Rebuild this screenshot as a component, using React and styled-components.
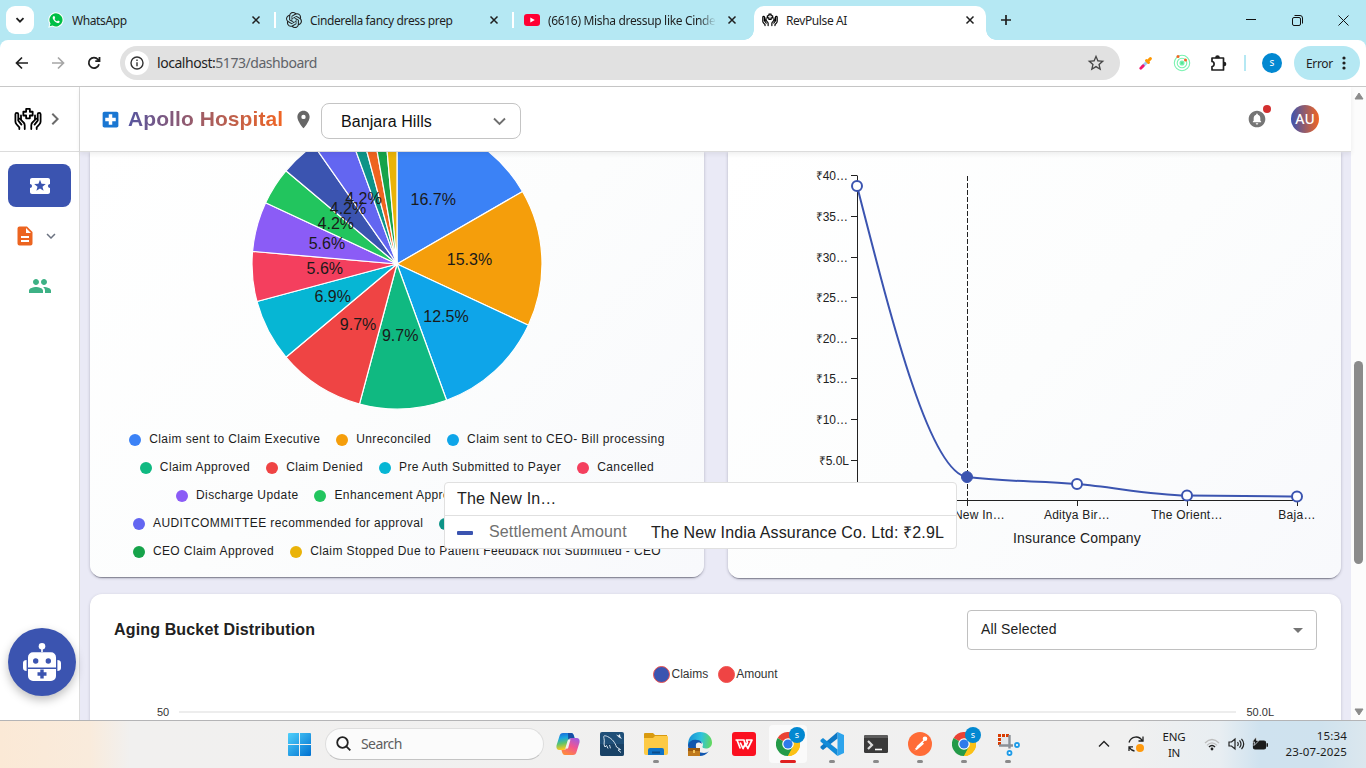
import React from "react";
import styled, { createGlobalStyle, css } from "styled-components";
import {
  MdLocalHospital,
  MdLocationOn,
  MdExpandMore,
  MdChevronRight,
  MdLocalActivity,
  MdPeople,
  MdCircleNotifications,
  MdArrowDropDown,
  MdStarBorder,
} from "react-icons/md";
import { SiOpenai } from "react-icons/si";

const UI_FONT = '"Noto Sans", "Open Sans", sans-serif';
const APP_FONT = '"Liberation Sans", Arial, sans-serif';
const INDIGO = "#3b54b0";

const Global = createGlobalStyle`
  * { box-sizing: border-box; }
  body { margin: 0; overflow: hidden; background: #fff; font-family: ${APP_FONT}; }
  svg { display: block; flex: none; }
`;

const Screen = styled.div`
  width: 1366px;
  height: 768px;
  display: flex;
  flex-direction: column;
  overflow: hidden;
  position: relative;
`;

/* ---------- browser window ---------- */

const TabStrip = styled.div`
  height: 40px;
  flex: none;
  background: #b5e8f3;
  display: flex;
  padding-left: 6px;
  font: 12px ${UI_FONT};
  color: #1f1f1f;
`;
const TabSearch = styled.div`
  width: 28px;
  height: 28px;
  margin: 6px 4px 0 0;
  border-radius: 9px;
  background: #fff;
  display: grid;
  place-items: center;
`;
const Tab = styled.div`
  width: 238px;
  height: 40px;
  display: flex;
  align-items: center;
  padding: 0 0 0 10px;
  position: relative;
  ${(p) =>
    p.$active &&
    css`
      &::before {
        content: "";
        position: absolute;
        inset: 6px 4px 0 2px;
        background: #fff;
        border-radius: 10px 10px 0 0;
      }
      &::after {
        content: "";
        position: absolute;
        bottom: 0;
        left: -8px;
        width: 252px;
        height: 10px;
        background: radial-gradient(circle at 0 0, transparent 9.5px, #fff 10px) left / 10px 10px no-repeat,
          radial-gradient(circle at 100% 0, transparent 9.5px, #fff 10px) right / 10px 10px no-repeat;
      }
    `}
  > * {
    position: relative;
    z-index: 1;
  }
`;
const TabTitle = styled.span`
  width: 168px;
  margin: 0 11px 0 8px;
  white-space: nowrap;
  overflow: hidden;
  letter-spacing: ${(p) => p.$ls || "-0.38px"};
  ${(p) => p.$fade && "mask-image: linear-gradient(90deg, #000 90%, transparent);"}
`;
const TabDivider = styled.i`
  width: 2px;
  height: 16px;
  margin-left: 13px;
  background: #fff;
`;
const NewTab = styled.div`
  width: 32px;
  display: grid;
  place-items: center;
`;
const WindowButtons = styled.div`
  margin-left: auto;
  display: flex;
  > div {
    width: 46px;
    display: grid;
    place-items: center;
  }
`;
const Toolbar = styled.div`
  height: 47px;
  flex: none;
  background: #b5e8f3;
`;
const ToolbarInner = styled.div`
  height: 47px;
  background: #fff;
  border-bottom: 1px solid #c8c8c8;
  border-radius: 8px 8px 0 0;
  display: flex;
  align-items: center;
  padding: 0 6px 0 4px;
  font-family: ${UI_FONT};
`;
const ToolButton = styled.div`
  width: 36px;
  flex: none;
  display: grid;
  place-items: center;
`;
const Omnibox = styled.div`
  width: 1000px;
  height: 34px;
  flex: none;
  margin: 0 8px;
  border-radius: 17px;
  background: #e1e1e1;
  display: flex;
  align-items: center;
  padding: 0 14px 1px 5px;
  font-size: 14px;
  letter-spacing: -0.46px;
  color: #5f6368;
  b {
    font-weight: 400;
    color: #1f1f1f;
  }
`;
const InfoBadge = styled.div`
  width: 24px;
  height: 24px;
  margin: 1px 8px 0 0;
  border-radius: 50%;
  background: #fff;
  display: grid;
  place-items: center;
`;
const Grow = styled.div`
  flex: 1;
`;
const ToolDivider = styled.i`
  width: 2px;
  height: 16px;
  flex: none;
  background: #b5e8f3;
  margin: 0 16px 0 8px;
`;
const ProfileDot = styled.div`
  width: 20px;
  height: 20px;
  border-radius: 50%;
  background: #0288d1;
  color: #fff;
  font-size: 10px;
  line-height: 19px;
  text-align: center;
  margin-right: 12px;
`;
const ErrorPill = styled.div`
  width: 66px;
  height: 34px;
  flex: none;
  border-radius: 17px;
  background: #b5e8f3;
  font-size: 12px;
  letter-spacing: -0.35px;
  color: #1f1f1f;
  display: flex;
  align-items: center;
  padding-left: 12px;
  gap: 9px;
`;

/* ---------- application shell ---------- */

const Viewport = styled.div`
  height: 633px;
  flex: none;
  display: flex;
  background: #fff;
`;
const Sidebar = styled.div`
  width: 80px;
  border-right: 1px solid #dcdcdc;
  display: flex;
  flex-direction: column;
`;
const SideHead = styled.div`
  height: 65px;
  border-bottom: 1px solid #dcdcdc;
  display: flex;
  align-items: center;
  padding-left: 14px;
  gap: 1px;
  color: #6b6b6b;
`;
const SideItem = styled.div`
  height: ${(p) => p.$h || 43}px;
  margin: ${(p) => p.$m};
  border-radius: 8px;
  display: flex;
  align-items: center;
  justify-content: center;
  gap: 5px;
  background: ${(p) => (p.$active ? INDIGO : "transparent")};
  color: ${(p) => p.$color};
`;
const Main = styled.div`
  width: 1271px;
  display: flex;
  flex-direction: column;
`;
const Header = styled.div`
  height: 65px;
  flex: none;
  border-bottom: 1px solid #dcdcdc;
  display: flex;
  align-items: center;
  padding: 0 32px 0 20px;
  background: #fff;
  box-shadow: 0 2px 5px rgba(0, 0, 0, 0.07);
  position: relative;
  z-index: 1;
`;
const Brand = styled.div`
  font-size: 21px;
  font-weight: 700;
  letter-spacing: 0.08px;
  margin: 0 9px 0 7px;
  width: 156px;
  white-space: nowrap;
  color: transparent;
  background: linear-gradient(90deg, #57559f, #f26522);
  background-clip: text;
  -webkit-background-clip: text;
`;
const BranchSelect = styled.div`
  width: 200px;
  height: 36px;
  margin: 4px 0 0 7px;
  border: 1px solid #c4c4c4;
  border-radius: 8px;
  display: flex;
  align-items: center;
  justify-content: space-between;
  padding: 1px 14px 0 19px;
  font-size: 16px;
  letter-spacing: 0.08px;
  color: #111;
`;
const Bell = styled.div`
  position: relative;
  color: #757575;
  &::after {
    content: "";
    position: absolute;
    right: -4px;
    top: -4px;
    width: 8px;
    height: 8px;
    border-radius: 50%;
    background: #d32f2f;
  }
`;
const UserAvatar = styled.div`
  width: 28px;
  height: 28px;
  margin: 0 0 0 24px;
  border-radius: 50%;
  background: linear-gradient(90deg, ${INDIGO}, #f26522);
  color: #fff;
  font: 500 14px/28px ${UI_FONT};
  text-align: center;
`;
const Content = styled.div`
  flex: 1;
  background: #eaeaf6;
  padding: 0 10px;
  overflow: hidden;
`;
const CardRow = styled.div`
  display: flex;
  gap: 24px;
  height: 442px;
  align-items: flex-start;
`;
const ChartCard = styled.div`
  width: ${(p) => p.$w}px;
  height: ${(p) => p.$h}px;
  border-radius: 0 0 12px 12px;
  background: linear-gradient(135deg, #ffffff 0%, #fcfdfd 50%, #f8f9fc 100%);
  box-shadow: 0 2px 1px -1px rgba(40, 40, 60, 0.4), 0 1px 3px rgba(40, 40, 60, 0.3);
`;
const LegendRow = styled.div`
  height: 28px;
  display: flex;
  align-items: center;
  gap: 16px;
  white-space: nowrap;
  justify-content: ${(p) => (p.$indent ? "flex-start" : "center")};
  padding-left: ${(p) => p.$indent || 0}px;
`;
const LegendItem = styled.div`
  display: flex;
  align-items: center;
  gap: 8px;
  font-size: 12px;
  letter-spacing: 0.4px;
  color: #1c1c1c;
  > i {
    width: 12px;
    height: 12px;
    margin-top: 2px;
    border-radius: 50%;
    background: ${(p) => p.$color};
  }
`;
const AgingCard = styled.div`
  height: 180px;
  border-radius: 12px;
  background: #fff;
  box-shadow: 0 1px 3px rgba(60, 60, 80, 0.25);
  padding: 16px 24px 0;
`;
const AgingHead = styled.div`
  display: flex;
  justify-content: space-between;
  height: 40px;
  h2 {
    margin: 0;
    font-size: 16px;
    line-height: 39px;
    color: #212121;
    letter-spacing: 0.15px;
  }
`;
const FilterSelect = styled.div`
  width: 350px;
  height: 40px;
  border: 1px solid #c0c0c0;
  border-radius: 4px;
  display: flex;
  align-items: center;
  justify-content: space-between;
  padding: 0 6px 2px 13px;
  font-size: 14px;
  letter-spacing: 0.15px;
  color: #212121;
  > svg {
    color: #757575;
    margin-top: 1px;
  }
`;
const BarLegend = styled.div`
  display: flex;
  justify-content: center;
  gap: 10px;
  margin: 16px 0 0;
  height: 16px;
`;
const BarLegendItem = styled.div`
  display: flex;
  align-items: center;
  gap: 1px;
  font-size: 12px;
  color: #333;
  &::before {
    content: "";
    width: 15px;
    height: 15px;
    border-radius: 50%;
    border: 1px solid #ef5350;
    background: ${(p) => p.$color};
  }
`;
const AxisLine = styled.div`
  display: flex;
  align-items: center;
  gap: 10px;
  margin-top: 22px;
  padding: 0 43px;
  font-size: 11px;
  color: #333;
  height: 16px;
  > i {
    flex: 1;
    height: 2px;
    background: #ededed;
  }
`;
const Scrollbar = styled.div`
  width: 15px;
  background: #fcfcfc;
  display: flex;
  flex-direction: column;
  align-items: center;
  padding: 5px 0 4px;
`;
const Thumb = styled.div`
  width: 9px;
  height: 203px;
  margin: 261px 0 auto;
  border-radius: 5px;
  background: #8b8b8b;
`;

/* ---------- overlays ---------- */

const Tooltip = styled.div`
  position: absolute;
  left: 444px;
  top: 482px;
  width: 513px;
  height: 67px;
  background: #fff;
  border: 1px solid #e0e0e0;
  border-radius: 4px;
  font-size: 16px;
  color: #212121;
  z-index: 3;
`;
const TooltipTitle = styled.div`
  height: 33px;
  line-height: 32px;
  padding-left: 12px;
  border-bottom: 1px solid #e0e0e0;
  letter-spacing: 0.15px;
`;
const TooltipRow = styled.div`
  height: 31px;
  display: flex;
  align-items: center;
  justify-content: space-between;
  padding: 0 12px;
  white-space: nowrap;
  letter-spacing: 0.15px;
  i {
    width: 16px;
    height: 4px;
    margin: 3px 16px 0 0;
    border-radius: 1px;
    background: ${INDIGO};
  }
  span {
    color: #707070;
    margin-right: auto;
  }
`;
const BotButton = styled.div`
  position: absolute;
  left: 8px;
  top: 628px;
  width: 68px;
  height: 68px;
  border-radius: 50%;
  background: ${INDIGO};
  box-shadow: 0 4px 10px rgba(0, 0, 0, 0.25);
  display: grid;
  place-items: center;
  z-index: 3;
`;

/* ---------- taskbar ---------- */

const Taskbar = styled.div`
  height: 48px;
  flex: none;
  border-top: 1px solid #b4b4b6;
  background: linear-gradient(90deg, #fbe9d6 0, #f9ebdc 90px, #f1f0ef 130px, #f0f0f0 1130px, #e8eef2 1220px, #cfe2ef 1260px, #cfe2ee 1320px, #dbe7ee 1366px);
  display: flex;
  align-items: center;
  padding: 0 19px 1px 277px;
  font-family: ${UI_FONT};
  color: #1b1b1b;
  position: relative;
  z-index: 4;
`;
const TaskItem = styled.div`
  width: 44px;
  height: 46px;
  display: grid;
  place-items: center;
  position: relative;
  &::before {
    content: "";
    position: absolute;
    inset: 4px 3px 4px;
    border-radius: 4px;
    background: ${(p) => (p.$active ? "#fafafa" : "transparent")};
  }
  &::after {
    content: "";
    display: ${(p) => (p.$open || p.$active ? "block" : "none")};
    position: absolute;
    bottom: 4px;
    left: ${(p) => (p.$active ? 14 : 19)}px;
    width: ${(p) => (p.$active ? 16 : 6)}px;
    height: 3px;
    border-radius: 2px;
    background: ${(p) => (p.$active ? "#e02020" : "#8a8a8a")};
  }
  > svg {
    position: relative;
  }
`;
const SearchBox = styled.div`
  width: 219px;
  height: 32px;
  margin: 0 2px 0 4px;
  border-radius: 16px;
  background: #fbfbfb;
  border: 1px solid #dedede;
  border-bottom-color: #c4c4c4;
  display: flex;
  align-items: center;
  gap: 10px;
  padding: 0 0 1px 10px;
  font-size: 14px;
  letter-spacing: -0.6px;
  color: #5e5e5e;
`;
const MiniBadge = styled.div`
  position: absolute;
  top: 6px;
  right: 5px;
  width: 16px;
  height: 16px;
  border-radius: 50%;
  background: #0288d1;
  color: #fff;
  font-size: 9px;
  line-height: 15px;
  text-align: center;
`;
const Tray = styled.div`
  margin-left: auto;
  display: flex;
  align-items: center;
  font-size: 11.5px;
  line-height: 16px;
  letter-spacing: -0.2px;
`;
const SyncIcon = styled.svg`
  margin-left: 17px;
`;
const VolumeIcon = styled.svg`
  margin-left: 8px;
`;
const BatteryIcon = styled.svg`
  margin-left: 7px;
`;
const Lang = styled.div`
  width: 30px;
  margin: 1px 15px 0 14px;
  text-align: center;
`;
const Clock = styled.div`
  width: 64px;
  margin: 0 0 1px 14px;
  text-align: right;
  white-space: nowrap;
  letter-spacing: 0.15px;
`;

/* ---------- drawings ---------- */

const Cross = () => (
  <svg width="10" height="10" viewBox="0 0 10 10" stroke="#1f1f1f" strokeWidth="1.5">
    <path d="M1.5 1.5l7 7M8.5 1.5l-7 7" />
  </svg>
);

const HandsLogo = ({ size = 28, w = 1.9 }) => (
  <svg width={size} height={size * 0.84} viewBox="0 0 30 25" fill="none" stroke="#000" strokeWidth={w} strokeLinejoin="round" strokeLinecap="round">
    <path d="M13 2h4v3h3v4h-3v3h-4V9h-3V5h3z" />
    <path d="M11.5 23.5v-4c0-1.5-.6-2.5-1.7-3.500L6.800 13c-1.500-1.400-3.200.3-2 1.800l3.200 4M4.600 13.500V7.700C4.600 5.600 1.500 5.600 1.500 7.700v7.800c0 1.200.4 2 1.200 2.900l3 3.300v1.800" />
    <path d="M18.500 23.500v-4c0-1.500.6-2.500 1.700-3.500l3-3c1.500-1.400 3.200.3 2 1.800l-3.200 4M25.400 13.500V7.700c0-2.100 3.100-2.100 3.100 0v7.800c0 1.200-.4 2-1.200 2.900l-3 3.300v1.800" />
    <path d="M7.500 13V9M22.500 13V9" />
  </svg>
);

const WhatsAppIcon = () => (
  <svg width="16" height="16" viewBox="0 0 16 16">
    <path d="M8 .3a7.600 7.600 0 0 0-6.600 11.400L.3 15.700l4.100-1.100A7.600 7.600 0 1 0 8 .3z" fill="#fff" />
    <path d="M8 1.300a6.600 6.600 0 0 0-5.500 10.200l-.8 2.800 2.900-.7A6.600 6.600 0 1 0 8 1.300z" fill="#00bf45" />
    <path d="M5.500 4.200c-1 .7-1.100 1.900-.2 3.400 1 1.700 2.400 3 4.200 3.500 1 .3 2-.3 2.200-1.300.1-.5-.1-.6-1.600-1.300-.4-.2-.7.9-1.200.8C7.900 9 7 8 6.600 7.200c-.2-.4.7-.7.6-1.100l-.6-1.500c-.2-.5-.7-.6-1.100-.4z" fill="#fff" />
  </svg>
);

const BotIcon = () => (
  <svg width="40" height="40" viewBox="0 0 40 40">
    <g fill="#fff">
      <circle cx="20" cy="4.200" r="3.300" />
      <path d="M19.200 6h1.600v4h-1.600z" />
      <path d="M11 10.300h18a5 5 0 0 1 5 5v10.200H6V15.300a5 5 0 0 1 5-5zM6 27h28v7a5 5 0 0 1-5 5H11a5 5 0 0 1-5-5z" />
      <path d="M4.600 18v11C2.400 29 1 28 1 26v-5c0-2 1.400-3 3.600-3zM35.400 18v11c2.200 0 3.600-1 3.600-3v-5c0-2-1.400-3-3.600-3z" />
    </g>
    <circle cx="13.700" cy="19" r="2.700" fill={INDIGO} />
    <circle cx="26.300" cy="19" r="2.700" fill={INDIGO} />
    <path d="M20 27.500v9M15.500 32h9" stroke={INDIGO} strokeWidth="3.400" />
  </svg>
);

const ChromeIcon = () => (
  <svg width="24" height="24" viewBox="0 0 24 24">
    <path d="M12 12L1.600 6A12 12 0 0 1 22.400 6z" fill="#ea4335" />
    <path d="M12 12L22.400 6A12 12 0 0 1 12 24l-2-3z" fill="#fbbc04" />
    <path d="M12 12l5.200 3L12 24A12 12 0 0 1 1.600 6z" fill="#249a48" />
    <path d="M12 6.500h10.700A12 12 0 0 1 12 24l4.800-9.200z" fill="#fbc116" />
    <circle cx="12" cy="12" r="5.800" fill="#fff" />
    <circle cx="12" cy="12" r="4.600" fill="#2f7bea" />
  </svg>
);

const SLICES = [
  [12, "#3b82f6"],
  [11, "#f59e0b"],
  [9, "#0ea5e9"],
  [7, "#10b981"],
  [7, "#ef4444"],
  [5, "#06b6d4"],
  [4, "#f43f5e"],
  [4, "#8b5cf6"],
  [3, "#22c55e"],
  [3, "#3b54b0"],
  [3, "#6366f1"],
  [1, "#0d9488"],
  [1, "#ee6420"],
  [1, "#16a34a"],
  [1, "#eab308"],
];

function PieChart() {
  const total = 72;
  const cx = 307;
  const cy = 112;
  const at = (n, r) => {
    const a = (n / total) * 2 * Math.PI;
    return [cx + r * Math.sin(a), cy - r * Math.cos(a)];
  };
  let sum = 0;
  const arcs = SLICES.map(([n, color]) => {
    const start = sum;
    sum += n;
    return { n, color, start, end: sum };
  });
  return (
    <svg width="614" height="273" viewBox="0 0 614 273">
      {arcs.map((s) => (
        <path
          key={s.start}
          d={`M${cx} ${cy}L${at(s.start, 145)}A145 145 0 0 1 ${at(s.end, 145)}Z`}
          fill={s.color}
          stroke="#fff"
          strokeWidth="1.2"
          strokeLinejoin="round"
        />
      ))}
      {arcs
        .filter((s) => s.n > 1)
        .map((s) => {
          const [x, y] = at((s.start + s.end) / 2, 72.5);
          return (
            <text key={s.start} x={x} y={Math.floor(y + (y > cy + 30 ? 5 : 4.4))} textAnchor="middle" fontSize="16" fill="#1a1a1a">
              {((s.n / total) * 100).toFixed(1)}%
            </text>
          );
        })}
    </svg>
  );
}

const POINTS = [
  [129, 34],
  [239, 325],
  [349, 332],
  [459, 343.5],
  [569, 344.5],
];
const TANGENTS = [3.9, 0.127, 0.084, 0.018, 0.005];
const Y_TICKS = ["₹40…", "₹35…", "₹30…", "₹25…", "₹20…", "₹15…", "₹10…", "₹5.0L"];
const X_TICKS = ["", "The New In…", "Aditya Bir…", "The Orient…", "Baja…"];

function SettlementChart() {
  const step = 110 / 3;
  const d = POINTS.slice(1).reduce((path, [x, y], i) => {
    const [px, py] = POINTS[i];
    return `${path}C${px + step} ${py + TANGENTS[i] * step} ${x - step} ${y - TANGENTS[i + 1] * step} ${x} ${y}`;
  }, `M${POINTS[0]}`);
  return (
    <svg width="613" height="426" viewBox="0 0 613 426" fill="#212121" fontSize="12">
      <path d="M129.500 23.500V348.500H569" fill="none" stroke="#212121" />
      {Y_TICKS.map((t, i) => {
        const y = Math.round(23.4 + i * 40.6);
        return (
          <g key={t}>
            <path d={`M123 ${y + 0.5}h6`} stroke="#212121" />
            <text x={i === 7 ? 121 : 120} y={y + 5} textAnchor="end">
              {t}
            </text>
          </g>
        );
      })}
      {X_TICKS.map((t, i) => (
        <g key={t}>
          {i > 0 && <path d={`M${POINTS[i][0] + 0.5} 348v6`} stroke="#212121" />}
          <text x={POINTS[i][0]} y="367" textAnchor="middle" letterSpacing="0.25">
            {t}
          </text>
        </g>
      ))}
      <text x="349" y="391" textAnchor="middle" fontSize="14" letterSpacing="0.15">
        Insurance Company
      </text>
      <path d="M239.500 24v324" stroke="#212121" strokeDasharray="5 2" />
      <path d={d} fill="none" stroke={INDIGO} strokeWidth="2" />
      {POINTS.map(([x, y], i) => (
        <circle key={x} cx={x} cy={y} r={i === 1 ? 5.5 : 5} fill={i === 1 ? INDIGO : "#fff"} stroke={INDIGO} strokeWidth={i === 1 ? 1 : 2} />
      ))}
    </svg>
  );
}

const Legend = ({ items, indent }) => (
  <LegendRow $indent={indent}>
    {items.map(([color, label]) => (
      <LegendItem key={color} $color={color}>
        <i />
        {label}
      </LegendItem>
    ))}
  </LegendRow>
);

function BrowserChrome() {
  return (
    <>
      <TabStrip>
        <TabSearch>
          <svg width="10" height="10" viewBox="0 0 10 10" fill="none" stroke="#1f1f1f" strokeWidth="1.8">
            <path d="M1.5 3.2L5 6.700l3.500-3.500" />
          </svg>
        </TabSearch>
        <Tab>
          <WhatsAppIcon />
          <TabTitle $ls="-0.4px">WhatsApp</TabTitle>
          <Cross />
          <TabDivider />
        </Tab>
        <Tab>
          <SiOpenai size={16} color="#222" />
          <TabTitle>Cinderella fancy dress prep</TabTitle>
          <Cross />
          <TabDivider />
        </Tab>
        <Tab>
          <svg width="16" height="16" viewBox="0 0 16 16">
            <rect y="2" width="16" height="12" rx="3" fill="#ff0033" />
            <path d="M6.300 5.500v5L10.800 8z" fill="#fff" />
          </svg>
          <TabTitle $fade $ls="-0.33px">(6616) Misha dressup like Cinderella</TabTitle>
          <Cross />
        </Tab>
        <Tab $active>
          <HandsLogo size={16} w={2.2} />
          <TabTitle>RevPulse AI</TabTitle>
          <Cross />
        </Tab>
        <NewTab>
          <svg width="12" height="12" viewBox="0 0 12 12" stroke="#1f1f1f" strokeWidth="1.7">
            <path d="M6 1v10M1 6h10" />
          </svg>
        </NewTab>
        <WindowButtons>
          <div>
            <svg width="10" height="10" stroke="#111">
              <path d="M0 4.500h10" />
            </svg>
          </div>
          <div>
            <svg width="11" height="11" fill="none" stroke="#111">
              <rect x=".5" y="2.500" width="8" height="8" rx="1.500" />
              <path d="M2.500.5h5.500a2.500 2.500 0 0 1 2.500 2.500v5.500" />
            </svg>
          </div>
          <div>
            <svg width="11" height="11" stroke="#111">
              <path d="M.5.5l10 10M10.500.5l-10 10" />
            </svg>
          </div>
        </WindowButtons>
      </TabStrip>
      <Toolbar>
        <ToolbarInner>
          <ToolButton>
            <svg width="14" height="14" viewBox="0 0 14 14" fill="none" stroke="#1f1f1f" strokeWidth="1.7">
              <path d="M13 7H2M7 1.500L1.500 7 7 12.500" />
            </svg>
          </ToolButton>
          <ToolButton>
            <svg width="14" height="14" viewBox="0 0 14 14" fill="none" stroke="#a6a6a6" strokeWidth="1.7">
              <path d="M1 7h11M7 1.500L12.500 7 7 12.500" />
            </svg>
          </ToolButton>
          <ToolButton>
            <svg width="14" height="14" viewBox="0 0 14 14" fill="none" stroke="#1f1f1f" strokeWidth="1.8">
              <path d="M12 8.200A5.200 5.200 0 1 1 11 3.500l1 1.200M12.500 1v4.200H8.300" />
            </svg>
          </ToolButton>
          <Omnibox>
            <InfoBadge>
              <svg width="14" height="14" viewBox="0 0 14 14" fill="none" stroke="#333" strokeWidth="1.4">
                <circle cx="7" cy="7" r="6" />
                <path d="M7 6.200v4M7 3.600v1.500" />
              </svg>
            </InfoBadge>
            <b>localhost:</b>5173/dashboard
            <Grow />
            <MdStarBorder size={20} color="#474747" />
          </Omnibox>
          <ToolButton>
            <svg width="14" height="14" viewBox="0 0 14 14">
              <path d="M3 11l6-6" stroke="#9cc9f5" strokeWidth="3" />
              <path d="M1.800 12.200l2.400-2.400" stroke="#f4156c" strokeWidth="2.8" strokeLinecap="round" />
              <path d="M7.500 4.500l2 2M8.800 5.200l2.600-2.600" stroke="#ff9800" strokeWidth="3" strokeLinecap="round" />
            </svg>
          </ToolButton>
          <ToolButton>
            <svg width="18" height="18" viewBox="0 0 18 18" fill="none" stroke="#79f2b0" strokeWidth="1.1">
              <circle cx="9" cy="9" r="7.700" />
              <circle cx="9" cy="9" r="4.800" />
              <circle cx="9" cy="9" r="2" fill="#57e596" />
              <circle cx="5" cy="2.500" r="1.500" fill="#f26522" stroke="none" />
              <circle cx="12.500" cy="6" r="1.500" fill="#f26522" stroke="none" />
            </svg>
          </ToolButton>
          <ToolButton>
            <svg width="18" height="18" viewBox="0 0 18 18" fill="none" stroke="#1f1f1f" strokeWidth="1.7" strokeLinejoin="round">
              <path d="M3 4h11.500v12H3v-3.500c2.800 0 2.800-5 0-5z" />
              <path d="M7 3.500a1.500 1.500 0 0 1 3 0zM15 8.500a1.500 1.500 0 0 1 0 3z" fill="#1f1f1f" />
            </svg>
          </ToolButton>
          <ToolDivider />
          <ProfileDot>s</ProfileDot>
          <ErrorPill>
            Error
            <svg width="4" height="14" fill="#1f1f1f">
              <circle cx="2" cy="2" r="1.600" />
              <circle cx="2" cy="7" r="1.600" />
              <circle cx="2" cy="12" r="1.600" />
            </svg>
          </ErrorPill>
        </ToolbarInner>
      </Toolbar>
    </>
  );
}

function WindowsTaskbar() {
  return (
    <Taskbar>
      <TaskItem>
        <svg width="23" height="23" viewBox="0 0 23 23">
          <defs>
            <linearGradient id="win" x1="0" y1="0" x2="1" y2="1" gradientUnits="objectBoundingBox">
              <stop offset="0" stopColor="#4fd0fb" />
              <stop offset="1" stopColor="#0070d0" />
            </linearGradient>
          </defs>
          <path d="M0 1q0-1 1-1h10v11H0zM12 0h10q1 0 1 1v10H12zM0 12h11v11H1q-1 0-1-1zM12 12h11v10q0 1-1 1H12z" fill="url(#win)" />
        </svg>
      </TaskItem>
      <SearchBox>
        <svg width="15" height="15" viewBox="0 0 15 15" fill="none" stroke="#222" strokeWidth="1.8">
          <circle cx="6.500" cy="6.500" r="5.300" />
          <path d="M10.300 10.300l4 4" />
        </svg>
        Search
      </SearchBox>
      <TaskItem>
        <svg width="24" height="22" viewBox="0 0 24 22">
          <defs>
            <linearGradient id="cpa" x1="0" y1="0" x2=".2" y2="1">
              <stop offset="0" stopColor="#1b62d8" />
              <stop offset=".35" stopColor="#1aa6e0" />
              <stop offset=".65" stopColor="#5fc46a" />
              <stop offset="1" stopColor="#ffc91f" />
            </linearGradient>
            <linearGradient id="cpb" x1=".8" y1="0" x2=".3" y2="1">
              <stop offset="0" stopColor="#a05be0" />
              <stop offset=".5" stopColor="#f2558f" />
              <stop offset="1" stopColor="#ff8a3c" />
            </linearGradient>
          </defs>
          <path d="M7 0h8c2 0 2.500 1.500 3 3l.5 2h-3c-2 0-3 1-3.500 3L10 15c-.5 1.500-1.500 2-3 2H3.500C1 17 0 15 .5 12.500L3.500 3C4 1 5 0 7 0z" fill="url(#cpa)" />
          <path d="M17 22H9c-2 0-2.500-1.500-3-3l-.5-2h2c2 0 3-1 3.500-3l2-7c.5-1.500 1.500-2 3-2h4.500C23 5 24 7 23.500 9.500l-3 9.500c-.5 2-1.500 3-3.500 3z" fill="url(#cpb)" />
          <path d="M14.500 6.500L12 15.500H9.300l2.700-9z" fill="#f1f0ef" />
          <path d="M12 0h3c2 0 2.500 1.500 3 3l.5 2h-3c-2 0-3 1-3.300 2z" fill="#174fa5" />
        </svg>
      </TaskItem>
      <TaskItem>
        <svg width="24" height="24" viewBox="0 0 24 24">
          <rect width="24" height="24" rx="2" fill="#1f4f78" />
          <path d="M0 12h24v10a2 2 0 0 1-2 2H2a2 2 0 0 1-2-2z" fill="#173d5e" opacity=".7" />
          <path d="M5 15C3 12 5 10 4 6.500 3 3 5 3.500 7.500 4.500c5 2.500 7.500 6 9 10.500l4 2.500-2.500.5 3 2.500M5 15l1.500-1.500 1.500 3M9.500 13c1 2 0 3 1.500 3" fill="none" stroke="#d7e5f0" strokeWidth="1" />
          <path d="M16 2.500l2.500 1L20 2l.3 2.500L22 7l-3-1.500z" fill="#e8f0f7" />
        </svg>
      </TaskItem>
      <TaskItem $open>
        <svg width="24" height="22" viewBox="0 0 24 22">
          <path d="M1 0h8l2 2h12v4H0V1q0-1 1-1z" fill="#d99a0f" />
          <path d="M0 5h9l2-2h12q1 0 1 1v16q0 2-2 2H2q-2 0-2-2z" fill="#fdca45" />
          <path d="M4 22v-5q0-2 2-2h12q2 0 2 2v5z" fill="#1073c6" />
          <path d="M8 18.500h8v2H8z" fill="#0a4d8c" />
        </svg>
      </TaskItem>
      <TaskItem>
        <svg width="24" height="24" viewBox="0 0 24 24">
          <defs>
            <linearGradient id="edge" x1="0" y1=".3" x2="1" y2=".4">
              <stop offset="0" stopColor="#168fd6" />
              <stop offset=".55" stopColor="#2fc3dd" />
              <stop offset="1" stopColor="#62d85e" />
            </linearGradient>
          </defs>
          <path d="M0 13C0 5 5 0 12 0s12 5 12 10.500c0 4-3 6-6 6-2.500 0-4-1-3.500-2 1-2 .5-5-3-5-5 0-7 4-6.500 8z" fill="url(#edge)" />
          <path d="M8 12c-1 6 3 9 8 9 2 0 4-1 5-2-3 4-6 5-9 5C4 24 0 19 0 13c1-4 5-6 9-5 3 0 5 2 5 4-2-2-5-2-6 0z" fill="#1156ae" />
          <path d="M0 16h12v8H0z" fill="#c07a1d" />
          <path d="M0 16h12v3H0z" fill="#9a5a10" />
          <path d="M5 18h2v3H5z" fill="#f6c65b" />
        </svg>
      </TaskItem>
      <TaskItem>
        <svg width="24" height="24" viewBox="0 0 24 24">
          <rect width="24" height="24" rx="3" fill="#fb1020" />
          <path d="M3.500 8h8.500l1.500 6 2-3.500-1-2.500h5.500l-4.200 8.500-2.300-5-2.500 5-2.800-6M5 8l3.300 8.500" fill="none" stroke="#fff" strokeWidth="1.7" strokeLinejoin="round" />
        </svg>
      </TaskItem>
      <TaskItem $active>
        <ChromeIcon />
        <MiniBadge>s</MiniBadge>
      </TaskItem>
      <TaskItem $open>
        <svg width="24" height="24" viewBox="0 0 24 24">
          <path d="M17.500 0L24 3v18l-6.500 3z" fill="#2da4ec" />
          <path d="M17.500 0v6.500L3 18 .5 16v-1.500z" fill="#0d78c5" />
          <path d="M17.500 24v-6.500L3 6 .5 8v1.500z" fill="#128bd8" />
        </svg>
      </TaskItem>
      <TaskItem $open>
        <svg width="24" height="20" viewBox="0 0 24 20">
          <rect y="1" width="24" height="18" rx="1.500" fill="#3a3a3a" />
          <path d="M0 4V2.500Q0 1 1.500 1h21Q24 1 24 2.500V4z" fill="#5d5d5d" />
          <path d="M4 7l4 4-4 4" fill="none" stroke="#ddd" strokeWidth="2.2" />
          <path d="M11 15.500h7" stroke="#fff" strokeWidth="1.6" />
        </svg>
      </TaskItem>
      <TaskItem $open>
        <svg width="24" height="24" viewBox="0 0 24 24">
          <circle cx="12" cy="12" r="12" fill="#ff6c37" />
          <path d="M5 19l3-1.200-1-1 7-7 2 2-7 6z" fill="#fff" />
          <circle cx="17" cy="6.800" r="2.300" fill="#fff" />
          <path d="M9 15l7-6.500" stroke="#fff" strokeWidth="1.5" />
        </svg>
      </TaskItem>
      <TaskItem $open>
        <ChromeIcon />
        <MiniBadge>s</MiniBadge>
      </TaskItem>
      <TaskItem $open>
        <svg width="24" height="24" viewBox="0 0 24 24">
          <path d="M5 5h9v8H5z" fill="#e3e6ea" />
          <path d="M3.500 13V3.500H14" fill="none" stroke="#d83b01" strokeWidth="3" strokeDasharray="3 1" />
          <path d="M13.500 3v13.500M3 13.500h14" stroke="#8a9097" strokeWidth="2.4" />
          <g fill="#fff" stroke="#1e9be8" strokeWidth="1.8">
            <circle cx="21" cy="13" r="2" />
            <circle cx="13.500" cy="21" r="2" />
          </g>
        </svg>
      </TaskItem>
      <Tray>
        <svg width="12" height="8" viewBox="0 0 12 8" fill="none" stroke="#222" strokeWidth="1.4">
          <path d="M1 6.500l5-5 5 5" />
        </svg>
        <SyncIcon width="18" height="18" viewBox="0 0 18 18" fill="none" stroke="#222" strokeWidth="1.3">
          <path d="M2 7.500C4 1 12 0 15.500 6M16 1.500V6h-4.500M2 16v-4.200h4M2.500 12.500c1 1.800 2.700 3.200 5 3.500" />
          <circle cx="13" cy="13" r="4" fill="#ff9a0e" stroke="none" />
        </SyncIcon>
        <Lang>
          ENG
          <br />
          IN
        </Lang>
        <svg width="16" height="13" viewBox="0 0 16 13" fill="none" strokeWidth="1.2">
          <path d="M1 5q7-7 14 0M3 7.300q5-5 10 0" stroke="#bdbdbd" />
          <path d="M5 9q3-3 6 0" stroke="#222" strokeWidth="1.5" />
          <circle cx="8" cy="11" r="1.400" fill="#222" />
        </svg>
        <VolumeIcon width="17" height="14" viewBox="0 0 17 14" fill="none" stroke="#222" strokeWidth="1.2">
          <path d="M1 5v4h2.500L7 12V2L3.500 5zM9.500 5q1.500 2 0 4M11.500 3.300q3 3.700 0 7.400M13.500 1.800q4.400 5.200 0 10.400" />
        </VolumeIcon>
        <BatteryIcon width="17" height="14" viewBox="0 0 17 14">
          <rect x="1.500" y="4" width="12" height="8" rx="1.500" fill="#1b1b1b" stroke="#1b1b1b" strokeWidth="1.2" />
          <path d="M14.500 6.200v3.600H16V6.200z" fill="#1b1b1b" />
          <path d="M4 0L0 5h2.500L2 8.500l5-5H4.500z" fill="#1b1b1b" stroke="#dfe9ef" strokeWidth=".8" />
        </BatteryIcon>
        <Clock>
          15:34
          <br />
          23-07-2025
        </Clock>
      </Tray>
    </Taskbar>
  );
}

export default function App() {
  return (
    <Screen>
      <Global />
      <BrowserChrome />
      <Viewport>
        <Sidebar>
          <SideHead>
            <HandsLogo />
            <MdChevronRight size={24} />
          </SideHead>
          <SideItem $active $color="#fff" $m="12px 8px 0">
            <MdLocalActivity size={24} />
          </SideItem>
          <SideItem $h={24} $m="17px 8px 0 2px" $color="#6b7280">
            <svg width="24" height="24" viewBox="0 0 24 24">
              <path d="M14 2.500H6.500a2 2 0 0 0-2 2v15a2 2 0 0 0 2 2h11a2 2 0 0 0 2-2V8l-5.500-5.500zm2 15.500H8v-2h8v2zm0-4H8v-2h8v2zm-3-5V4l5 5H13z" fill="#ec6420" />
            </svg>
            <MdExpandMore size={18} />
          </SideItem>
          <SideItem $h={24} $m="26px 8px 0" $color="#3db185">
            <MdPeople size={24} />
          </SideItem>
        </Sidebar>
        <Main>
          <Header>
            <MdLocalHospital size={21} color="#1976d2" />
            <Brand>Apollo Hospital</Brand>
            <MdLocationOn size={21} color="#666" />
            <BranchSelect>
              Banjara Hills
              <svg width="13" height="9" viewBox="0 0 13 9" fill="none" stroke="#6f6f6f" strokeWidth="1.9">
                <path d="M1 1.500l5.500 5.500L12 1.500" />
              </svg>
            </BranchSelect>
            <Grow />
            <Bell>
              <MdCircleNotifications size={20} />
            </Bell>
            <UserAvatar>AU</UserAvatar>
          </Header>
          <Content>
            <CardRow>
              <ChartCard $w={614} $h={425}>
                <PieChart />
                <Legend
                  items={[
                    ["#3b82f6", "Claim sent to Claim Executive"],
                    ["#f59e0b", "Unreconciled"],
                    ["#0ea5e9", "Claim sent to CEO- Bill processing"],
                  ]}
                />
                <Legend
                  items={[
                    ["#10b981", "Claim Approved"],
                    ["#ef4444", "Claim Denied"],
                    ["#06b6d4", "Pre Auth Submitted to Payer"],
                    ["#f43f5e", "Cancelled"],
                  ]}
                />
                <Legend
                  indent={86}
                  items={[
                    ["#8b5cf6", "Discharge Update"],
                    ["#22c55e", "Enhancement Approved"],
                  ]}
                />
                <Legend
                  indent={43}
                  items={[
                    ["#6366f1", "AUDITCOMMITTEE recommended for approval"],
                    ["#0d9488", ""],
                  ]}
                />
                <Legend
                  items={[
                    ["#16a34a", "CEO Claim Approved"],
                    ["#eab308", "Claim Stopped Due to Patient Feedback not Submitted - CEO"],
                  ]}
                />
              </ChartCard>
              <ChartCard $w={613} $h={426}>
                <SettlementChart />
              </ChartCard>
            </CardRow>
            <AgingCard>
              <AgingHead>
                <h2>Aging Bucket Distribution</h2>
                <FilterSelect>
                  All Selected
                  <MdArrowDropDown size={24} />
                </FilterSelect>
              </AgingHead>
              <BarLegend>
                <BarLegendItem $color={INDIGO}>Claims</BarLegendItem>
                <BarLegendItem $color="#ef4444">Amount</BarLegendItem>
              </BarLegend>
              <AxisLine>
                50
                <i />
                50.0L
              </AxisLine>
            </AgingCard>
          </Content>
        </Main>
        <Scrollbar>
          <svg width="10" height="8" viewBox="0 0 10 8">
            <path d="M5 1L9 7H1z" fill="#8b8b8b" stroke="#8b8b8b" strokeLinejoin="round" />
          </svg>
          <Thumb />
          <svg width="10" height="8" viewBox="0 0 10 8">
            <path d="M5 7L9 1H1z" fill="#8b8b8b" stroke="#8b8b8b" strokeLinejoin="round" />
          </svg>
        </Scrollbar>
      </Viewport>
      <Tooltip>
        <TooltipTitle>The New In…</TooltipTitle>
        <TooltipRow>
          <i />
          <span>Settlement Amount</span>
          The New India Assurance Co. Ltd: ₹2.9L
        </TooltipRow>
      </Tooltip>
      <BotButton>
        <BotIcon />
      </BotButton>
      <WindowsTaskbar />
    </Screen>
  );
}
